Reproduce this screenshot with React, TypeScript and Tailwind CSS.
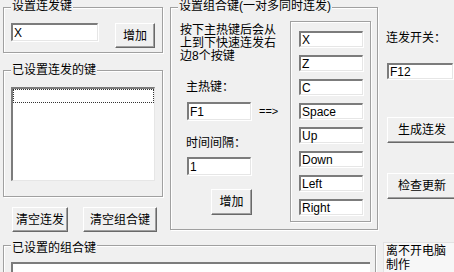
import React from "react";

function Group({ title, titleTop, className, children }: { title?: string; titleTop?: string; className: string; children?: React.ReactNode }) {
  return (
    <div className={`relative border border-[#a0a0a0] shadow-[inset_1px_1px_0_#fff,1px_1px_0_#fff] ${className}`}>
      {title && (
        <span className={`absolute left-[7px] ${titleTop} bg-[#f0f0f0] px-[1px] leading-[14px] whitespace-nowrap`}>{title}</span>
      )}
      {children}
    </div>
  );
}

function Field({ value, className }: { value: string; className: string }) {
  return (
    <div
      className={`flex items-center pl-[1px] bg-white border-t-2 border-l-2 border-b border-r border-t-[#7c7c7c] border-l-[#7c7c7c] border-b-[#e6e6e6] border-r-[#e6e6e6] shadow-[1px_1px_0_#fff] leading-none ${className}`}
    >
      {value}
    </div>
  );
}

function Btn({ label, className }: { label: string; className: string }) {
  return (
    <div
      className={`flex items-center justify-center border border-t-white border-l-white border-b-[#696969] border-r-[#696969] shadow-[inset_-1px_-1px_0_#a0a0a0] leading-none ${className}`}
    >
      {label}
    </div>
  );
}

const keys = ["X", "Z", "C", "Space", "Up", "Down", "Left", "Right"];

export default function App() {
  return (
    <div className="w-[454px] h-[272px] overflow-hidden bg-[#f0f0f0] text-black text-[12px] leading-[14px] font-['Liberation_Sans','Noto_Sans_CJK_SC',sans-serif]">
      <div className="flex h-[240px]">
        {/* left column */}
        <div className="ml-[3px] w-[160px] shrink-0 flex flex-col pt-[7px]">
          <Group title="设置连发键" titleTop="top-[-9px]" className="h-[46px]">
            <div className="flex items-start pl-[7px] pt-[15px]">
              <Field value="X" className="w-[87px] h-[18px]" />
              <Btn label="增加" className="ml-[17px] w-[40px] h-[25px]" />
            </div>
          </Group>
          <Group title="已设置连发的键" titleTop="top-[-8px]" className="mt-[17px] h-[127px]">
            <div className="pl-[7px] pt-[16px]">
              <div className="w-[144px] h-[94px] bg-white border-t-2 border-l-2 border-b border-r border-t-[#7c7c7c] border-l-[#7c7c7c] border-b-[#e6e6e6] border-r-[#e6e6e6]">
                <div className="h-[14px] border border-dotted border-[#333]" />
              </div>
            </div>
          </Group>
          <div className="flex mt-[10px] ml-[9px] gap-[15px]">
            <Btn label="清空连发" className="w-[56px] h-[25px]" />
            <Btn label="清空组合键" className="w-[74px] h-[25px]" />
          </div>
        </div>

        {/* middle group */}
        <div className="ml-[7px] w-[208px] shrink-0 pt-[7px]">
          <Group title="设置组合键(一对多同时连发)" titleTop="top-[-9px]" className="h-[223px] flex">
            <div className="w-[119px] shrink-0 pl-[9px] pt-[16px] flex flex-col">
              <div className="leading-[13px] whitespace-nowrap">
                按下主热键后会从
                <br />
                上到下快速连发右
                <br />
                边8个按键
              </div>
              <div className="mt-[17px] ml-[6px]">主热键：</div>
              <div className="flex items-center mt-[8px] ml-[7px]">
                <Field value="F1" className="w-[64px] h-[18px]" />
                <span className="ml-[8px] text-[11px]">==&gt;</span>
              </div>
              <div className="mt-[16px] ml-[6px]">时间间隔：</div>
              <Field value="1" className="mt-[7px] ml-[7px] w-[64px] h-[18px]" />
              <Btn label="增加" className="mt-[14px] ml-[31px] w-[41px] h-[26px]" />
            </div>
            <div className="mt-[13px] w-[81px] h-[201px] border border-[#a0a0a0] shadow-[inset_1px_1px_0_#fff,1px_1px_0_#fff] pl-[8px] pt-[9px] flex flex-col gap-[8px]">
              {keys.map((k) => (
                <Field key={k} value={k} className="w-[64px] h-[16px]" />
              ))}
            </div>
          </Group>
        </div>

        {/* right column */}
        <div className="ml-[8px] flex-1 flex flex-col pt-[31px]">
          <div className="whitespace-nowrap">连发开关：</div>
          <Field value="F12" className="mt-[18px] ml-[1px] w-[66px] h-[16px]" />
          <Btn label="生成连发" className="mt-[38px] ml-[1px] w-[80px] h-[26px] justify-start pl-[10px]" />
          <Btn label="检查更新" className="mt-[30px] ml-[1px] w-[80px] h-[26px] justify-start pl-[10px]" />
        </div>
      </div>

      <div className="flex">
        <div className="ml-[3px] w-[373px] shrink-0 pt-[5px]">
          <Group title="已设置的组合键" titleTop="top-[-5px]" className="h-[40px]">
            <div className="pl-[7px] pt-[16px]">
              <div className="w-[359px] h-[30px] bg-white border-t-2 border-l-2 border-t-[#7c7c7c] border-l-[#7c7c7c]" />
            </div>
          </Group>
        </div>
        <div className="ml-[7px] flex-1 mt-[2px] bg-[#f7f7f7] border-l border-t border-[#e2e2e2] pl-[2px] pt-[1px] whitespace-nowrap">
          离不开电脑
          <br />
          制作
        </div>
      </div>
    </div>
  );
}
